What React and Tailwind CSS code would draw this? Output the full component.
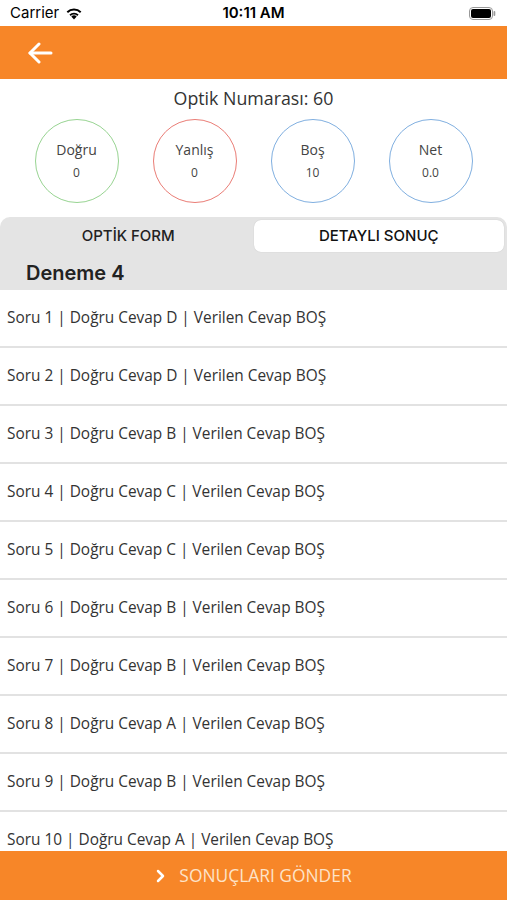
import React from 'react';

const stats = [
  { label: 'Doğru', value: '0', color: 'border-[#98d492]' },
  { label: 'Yanlış', value: '0', color: 'border-[#ea7d76]' },
  { label: 'Boş', value: '10', color: 'border-[#80afe0]' },
  { label: 'Net', value: '0.0', color: 'border-[#80afe0]' },
];

const answers = ['D', 'D', 'B', 'C', 'C', 'B', 'B', 'A', 'B', 'A'];

const App = () => {
  return (
    <div className="h-[900px] w-[507px] flex flex-col overflow-hidden bg-white text-[#333]" style={{ fontFamily: '"Open Sans", Lato, sans-serif' }}>
      {/* status bar */}
      <div className="h-[26px] flex items-center justify-between px-[10px] text-[15px] text-black shrink-0" style={{ fontFamily: 'Inter, "Liberation Sans", sans-serif' }}>
        <div className="flex items-center gap-[6px] w-[100px]">
          <span>Carrier</span>
          <svg width="18" height="13" viewBox="0 0 18 13">
            <path d="M9 12.5 L6.3 9.5 A4 4 0 0 1 11.7 9.5 Z" fill="#000" />
            <path d="M4.4 7.5 A6.6 6.6 0 0 1 13.6 7.5 L12.3 8.9 A4.7 4.7 0 0 0 5.7 8.9 Z" fill="#000" />
            <path d="M1.6 4.6 A10.5 10.5 0 0 1 16.4 4.6 L15 6 A8.5 8.5 0 0 0 3 6 Z" fill="#000" />
          </svg>
        </div>
        <span className="font-semibold">10:11 AM</span>
        <div className="w-[100px] flex justify-end pr-[1px]">
          <svg width="27" height="13" viewBox="0 0 27 13">
            <rect x="0.5" y="0.5" width="23" height="12" rx="3.5" fill="none" stroke="#999" />
            <rect x="2" y="2" width="20" height="9" rx="2" fill="#000" />
            <rect x="24.5" y="4" width="1.8" height="5" rx="0.9" fill="#999" />
          </svg>
        </div>
      </div>

      {/* header */}
      <div className="h-[53px] bg-[#f78628] flex items-center px-[27px] shrink-0">
        <svg width="26" height="22" viewBox="0 0 26 22" fill="none" stroke="#fff" strokeWidth="3" strokeLinecap="round" strokeLinejoin="round">
          <path d="M24 11 H3" />
          <path d="M12 2 L3 11 L12 20" />
        </svg>
      </div>

      <div className="text-center text-[17.8px] text-[#333] mt-[7px] leading-[24px] shrink-0">Optik Numarası: 60</div>

      <div className="flex justify-center gap-[34px] mt-[9px] shrink-0">
        {stats.map((s) => (
          <div key={s.label} className={`w-[84px] h-[84px] rounded-full border-[1.5px] ${s.color} flex flex-col items-center justify-center`}>
            <span className="text-[14px] leading-[18px] text-[#444]">{s.label}</span>
            <span className="text-[12px] leading-[16px] mt-[6px] text-[#444]">{s.value}</span>
          </div>
        ))}
      </div>

      {/* tabs */}
      <div className="mt-[14px] bg-[#e4e4e4] rounded-t-[10px] px-[3px] py-[3px] flex shrink-0" style={{ fontFamily: 'Inter, "Liberation Sans", sans-serif' }}>
        <div className="flex-1 h-[32px] flex items-center justify-center text-[15px] font-medium text-[#222]">OPTİK FORM</div>
        <div className="flex-1 h-[32px] flex items-center justify-center text-[15px] font-medium text-[#111] bg-white rounded-[7px] shadow-[0_0_1px_rgba(0,0,0,0.2)]">DETAYLI SONUÇ</div>
      </div>
      <div className="h-[35px] bg-[#e4e4e4] flex items-center px-[26px] text-[20px] font-semibold text-[#222] shrink-0" style={{ fontFamily: 'Inter, "Liberation Sans", sans-serif' }}>
        Deneme 4
      </div>

      {/* list */}
      <div className="flex-1 overflow-hidden">
        {answers.map((a, i) => (
          <div key={i} className="h-[58px] border-b-[2px] border-[#e2e2e2] flex items-center px-[7px] text-[15.4px] text-[#333]">
            Soru {i + 1} | Doğru Cevap {a} | Verilen Cevap BOŞ
          </div>
        ))}
      </div>

      {/* bottom button */}
      <div className="h-[49px] bg-[#f78628] flex items-center justify-center gap-[14px] shrink-0">
        <svg width="10" height="14" viewBox="0 0 10 14" fill="none" stroke="#fff" strokeWidth="2.5" strokeLinecap="round" strokeLinejoin="round">
          <path d="M3 2 L8 7 L3 12" />
        </svg>
        <span className="text-[17.4px] text-[#fde3c8]">SONUÇLARI GÖNDER</span>
      </div>
    </div>
  );
};

export default App;
